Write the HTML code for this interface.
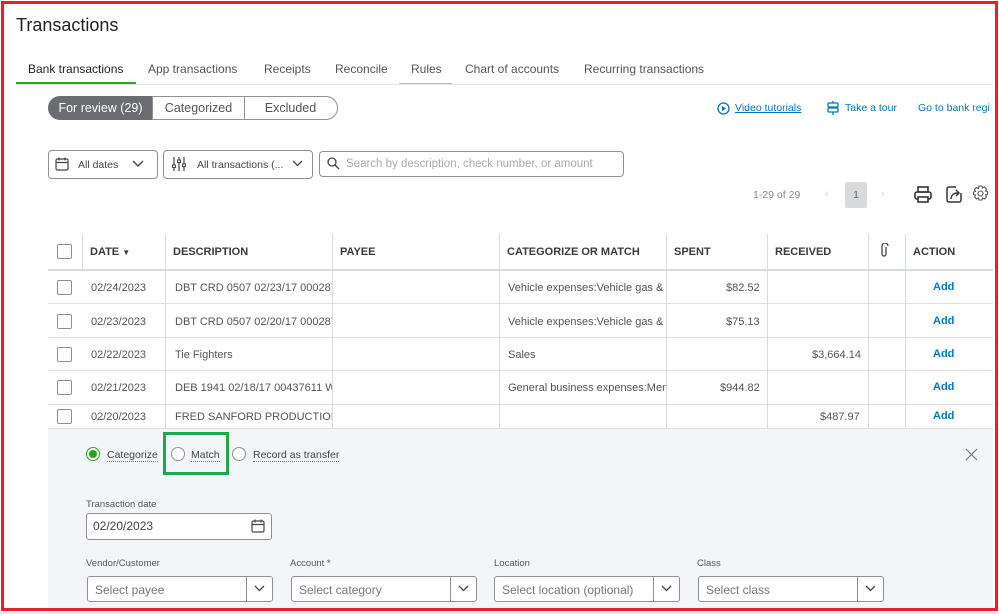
<!DOCTYPE html>
<html><head><meta charset="utf-8"><style>
*{box-sizing:border-box;margin:0;padding:0}
body{width:999px;height:614px;overflow:hidden;background:#e8e8ea;font-family:"Liberation Sans",sans-serif;color:#393a3d;position:relative}
.page{position:absolute;left:0;top:0;width:999px;height:612px;background:#fff}
.a{position:absolute;white-space:nowrap}
.red{position:absolute;left:1px;top:1px;width:997px;height:610px;border:3px solid #e8202a;pointer-events:none}
.tab{font-size:12px;color:#555;top:62px}
.seg{position:absolute;top:96px;height:24px;font-size:12.5px;line-height:22px;text-align:center}
.box{position:absolute;border:1px solid #8d9096;border-radius:4px;background:#fff}
.cb{position:absolute;left:57px;width:15px;height:15px;border:1px solid #8d9096;border-radius:2px;background:#fff}
.th{font-size:11px;font-weight:bold;color:#393a3d;top:246px}
.td{font-size:11px;color:#555}
.vl{position:absolute;width:1px;background:#d4dcea}
.hl{position:absolute;left:48px;width:945px;height:1px;background:#dcdfe4}
.add{font-size:11px;font-weight:bold;color:#0077c5;left:933px}
.lbl{font-size:9.5px;color:#555}
.sel{position:absolute;top:576px;height:26px;border:1px solid #8d9096;border-radius:3px;background:#fff;font-size:12px;color:#777;padding:6px 7px}
.sel .dd{position:absolute;right:0;top:0;width:26px;height:24px;border-left:1px solid #8d9096}
.dd svg{position:absolute;left:7px;top:8px}
.rad{position:absolute;width:14px;height:14px;border:1px solid #8d9096;border-radius:50%;background:#fff}
.u{border-bottom:1px dotted #777}
</style></head><body>
<div class="page">
<div class="a" style="left:16px;top:15px;font-size:18px;color:#222">Transactions</div>
<div class="a tab" style="left:28px;color:#222">Bank transactions</div>
<div class="a tab" style="left:148px">App transactions</div>
<div class="a tab" style="left:264px">Receipts</div>
<div class="a tab" style="left:335px">Reconcile</div>
<div class="a tab" style="left:411px">Rules</div>
<div class="a tab" style="left:465px">Chart of accounts</div>
<div class="a tab" style="left:584px">Recurring transactions</div>
<div style="position:absolute;left:16px;top:84px;width:977px;height:1px;background:#e3e5e8"></div>
<div style="position:absolute;left:16px;top:82px;width:120px;height:2px;background:#2ca01c"></div>
<div style="position:absolute;left:399px;top:83px;width:53px;height:1px;background:#bbb"></div>

<div class="seg" style="left:48px;width:105px;background:#6b6c72;color:#fff;border-radius:12px 0 0 12px;border:1px solid #6b6c72">For review (29)</div>
<div class="seg" style="left:152px;width:93px;border:1px solid #8d9096;color:#555">Categorized</div>
<div class="seg" style="left:244px;width:94px;border:1px solid #8d9096;border-left:none;border-radius:0 12px 12px 0;color:#555">Excluded</div>

<svg class="a" style="left:717px;top:102px" width="13" height="13" viewBox="0 0 13 13"><circle cx="6.5" cy="6.5" r="5.5" fill="none" stroke="#0077c5" stroke-width="1.3"/><path d="M5 4v5l4-2.5z" fill="#0077c5"/></svg>
<div class="a" style="left:735px;top:102px;font-size:10.5px;color:#0077c5;text-decoration:underline">Video tutorials</div>
<svg class="a" style="left:827px;top:101px" width="12" height="14" viewBox="0 0 12 14"><rect x="1" y="2" width="10" height="4" rx="1" fill="none" stroke="#0077c5" stroke-width="1.3"/><rect x="1" y="7" width="10" height="4" rx="1" fill="none" stroke="#0077c5" stroke-width="1.3"/><path d="M6 0v2M6 11v3" stroke="#0077c5" stroke-width="1.3"/></svg>
<div class="a" style="left:845px;top:102px;font-size:10.5px;color:#0077c5">Take a tour</div>
<div class="a" style="left:918px;top:102px;font-size:10.5px;color:#0077c5">Go to bank regi</div>

<div class="box" style="left:48px;top:150px;width:110px;height:29px"></div>
<svg class="a" style="left:55px;top:157px" width="14" height="14" viewBox="0 0 14 14"><rect x="1" y="2" width="12" height="11" rx="1.5" fill="none" stroke="#444" stroke-width="1.2"/><path d="M1 5.5h12M4 0.5v3M10 0.5v3" stroke="#444" stroke-width="1.2"/></svg>
<div class="a" style="left:78px;top:159px;font-size:10.5px;color:#444">All dates</div>
<svg class="a" style="left:132px;top:160px" width="12" height="8"><path d="M1 1l5 5 5-5" fill="none" stroke="#444" stroke-width="1.4"/></svg>
<div class="box" style="left:163px;top:150px;width:150px;height:29px"></div>
<svg class="a" style="left:171px;top:157px" width="16" height="14" viewBox="0 0 16 14"><path d="M3 0v14M8 0v14M13 0v14" stroke="#444" stroke-width="1.2"/><rect x="1.5" y="8" width="3" height="2.5" fill="#fff" stroke="#444"/><rect x="6.5" y="3" width="3" height="2.5" fill="#fff" stroke="#444"/><rect x="11.5" y="7" width="3" height="2.5" fill="#fff" stroke="#444"/></svg>
<div class="a" style="left:197px;top:159px;font-size:10.5px;color:#444">All transactions (...</div>
<svg class="a" style="left:292px;top:160px" width="11" height="7"><path d="M1 1l4.5 4.5 4.5-4.5" fill="none" stroke="#444" stroke-width="1.3"/></svg>
<div class="box" style="left:319px;top:151px;width:305px;height:26px"></div>
<svg class="a" style="left:327px;top:157px" width="13" height="13"><circle cx="5" cy="5" r="4" fill="none" stroke="#444" stroke-width="1.3"/><path d="M8 8l4 4" stroke="#444" stroke-width="1.4"/></svg>
<div class="a" style="left:346px;top:158px;font-size:11.5px;color:#aaa">Search by description, check number, or amount</div>

<div class="a" style="left:753px;top:189px;font-size:10.5px;color:#888">1-29 of 29</div>
<div class="a" style="left:825px;top:188px;font-size:11px;color:#ccc">‹</div>
<div class="a" style="left:845px;top:182px;width:22px;height:26px;background:#d9dadc;border-radius:2px;font-size:10.5px;color:#666;text-align:center;line-height:26px">1</div>
<div class="a" style="left:881px;top:188px;font-size:11px;color:#ccc">›</div>
<svg class="a" style="left:914px;top:186px" width="18" height="17" viewBox="0 0 18 17"><rect x="4" y="1" width="10" height="5" fill="none" stroke="#333" stroke-width="1.6"/><rect x="1" y="6" width="16" height="7" rx="2" fill="none" stroke="#333" stroke-width="1.6"/><rect x="4" y="11" width="10" height="5" fill="#fff" stroke="#333" stroke-width="1.6"/></svg>
<svg class="a" style="left:946px;top:186px" width="16" height="17" viewBox="0 0 16 17"><path d="M10 1H3a2 2 0 0 0-2 2v11a2 2 0 0 0 2 2h10a2 2 0 0 0 2-2V7" fill="none" stroke="#333" stroke-width="1.5"/><path d="M5 13c0-4 3-6 7-6M10 4l3 3-3 3" fill="none" stroke="#333" stroke-width="1.4"/></svg>
<svg class="a" style="left:972px;top:185px" width="17" height="17" viewBox="0 0 17 17"><circle cx="8.5" cy="8.5" r="2.5" fill="none" stroke="#555" stroke-width="1.1"/><path d="M7 1h3l.5 2 2-1 2 2-1 2 2 .5v3l-2 .5 1 2-2 2-2-1-.5 2H7l-.5-2-2 1-2-2 1-2-2-.5V7l2-.5-1-2 2-2 2 1z" fill="none" stroke="#555" stroke-width="1.1"/></svg>

<div class="vl" style="left:82px;top:234px;height:36px"></div>
<div class="vl" style="left:165px;top:234px;height:194px"></div>
<div class="vl" style="left:332px;top:234px;height:194px"></div>
<div class="vl" style="left:499px;top:234px;height:194px"></div>
<div class="vl" style="left:666px;top:234px;height:194px"></div>
<div class="vl" style="left:767px;top:234px;height:194px"></div>
<div class="vl" style="left:868px;top:234px;height:194px"></div>
<div class="vl" style="left:905px;top:234px;height:194px"></div>
<div class="hl" style="top:269px;height:2px;background:#d8dbe0"></div>
<div class="hl" style="top:303px"></div><div class="hl" style="top:337px"></div><div class="hl" style="top:370px"></div><div class="hl" style="top:404px"></div><div class="hl" style="top:428px"></div>
<div class="cb" style="top:244px"></div>
<div class="a th" style="left:90px">DATE <span style="font-size:8px">▼</span></div>
<div class="a th" style="left:173px">DESCRIPTION</div>
<div class="a th" style="left:340px">PAYEE</div>
<div class="a th" style="left:507px">CATEGORIZE OR MATCH</div>
<div class="a th" style="left:674px">SPENT</div>
<div class="a th" style="left:775px">RECEIVED</div>
<svg class="a" style="left:880px;top:243px" width="9" height="15" viewBox="0 0 9 15"><path d="M6 4v7a2 2 0 0 1-4 0V3a3 3 0 0 1 6 0" fill="none" stroke="#444" stroke-width="1.3"/></svg>
<div class="a th" style="left:913px">ACTION</div>

<div class="cb" style="top:280px"></div><div class="a td" style="left:91px;top:282px">02/24/2023</div><div class="a td" style="left:175px;top:282px;width:157px;overflow:hidden">DBT CRD 0507 02/23/17 00028741</div><div class="a td" style="left:508px;top:282px;width:158px;overflow:hidden">Vehicle expenses:Vehicle gas &amp; fuel</div><div class="a td" style="left:726px;top:282px">$82.52</div><div class="a add" style="top:281px">Add</div>
<div class="cb" style="top:314px"></div><div class="a td" style="left:91px;top:316px">02/23/2023</div><div class="a td" style="left:175px;top:316px;width:157px;overflow:hidden">DBT CRD 0507 02/20/17 00028741</div><div class="a td" style="left:508px;top:316px;width:158px;overflow:hidden">Vehicle expenses:Vehicle gas &amp; fuel</div><div class="a td" style="left:726px;top:316px">$75.13</div><div class="a add" style="top:315px">Add</div>
<div class="cb" style="top:347px"></div><div class="a td" style="left:175px;top:349px">Tie Fighters</div><div class="a td" style="left:91px;top:349px">02/22/2023</div><div class="a td" style="left:508px;top:349px">Sales</div><div class="a td" style="left:812px;top:349px">$3,664.14</div><div class="a add" style="top:348px">Add</div>
<div class="cb" style="top:380px"></div><div class="a td" style="left:91px;top:382px">02/21/2023</div><div class="a td" style="left:175px;top:382px;width:157px;overflow:hidden">DEB 1941 02/18/17 00437611 WAL</div><div class="a td" style="left:508px;top:382px;width:158px;overflow:hidden">General business expenses:Membership</div><div class="a td" style="left:720px;top:382px">$944.82</div><div class="a add" style="top:381px">Add</div>
<div class="cb" style="top:409px"></div><div class="a td" style="left:91px;top:411px">02/20/2023</div><div class="a td" style="left:175px;top:411px;width:157px;overflow:hidden">FRED SANFORD PRODUCTIONS</div><div class="a td" style="left:820px;top:411px">$487.97</div><div class="a add" style="top:410px">Add</div>

<div style="position:absolute;left:48px;top:429px;width:945px;height:183px;background:#f4f5f8"></div>
<div class="rad" style="left:86px;top:447px;border-color:#2ca01c;border-width:1.5px"><div style="position:absolute;left:2px;top:2px;width:8px;height:8px;border-radius:50%;background:#2ca01c"></div></div>
<div class="a" style="left:107px;top:449px;font-size:10.5px;color:#444"><span class="u">Categorize</span></div>
<div style="position:absolute;left:163px;top:432px;width:66px;height:43px;border:3px solid #1fa84a"></div>
<div class="rad" style="left:171px;top:447px"></div>
<div class="a" style="left:191px;top:449px;font-size:10.5px;color:#444"><span class="u">Match</span></div>
<div class="rad" style="left:232px;top:447px"></div>
<div class="a" style="left:253px;top:449px;font-size:10.5px;color:#444"><span class="u">Record as transfer</span></div>
<svg class="a" style="left:965px;top:448px" width="13" height="13"><path d="M1 1l11 11M12 1L1 12" stroke="#777" stroke-width="1.2"/></svg>

<div class="a lbl" style="left:86px;top:499px">Transaction date</div>
<div class="box" style="left:86px;top:513px;width:186px;height:27px;border-radius:3px"></div>
<div class="a" style="left:93px;top:519px;font-size:12px;color:#444">02/20/2023</div>
<svg class="a" style="left:251px;top:519px" width="14" height="14" viewBox="0 0 14 14"><rect x="1" y="2" width="12" height="11" rx="1.5" fill="none" stroke="#444" stroke-width="1.2"/><path d="M1 5.5h12M4 0.5v3M10 0.5v3" stroke="#444" stroke-width="1.2"/></svg>

<div class="a lbl" style="left:86px;top:558px">Vendor/Customer</div>
<div class="a lbl" style="left:290px;top:558px">Account *</div>
<div class="a lbl" style="left:494px;top:558px">Location</div>
<div class="a lbl" style="left:697px;top:558px">Class</div>
<div class="sel" style="left:87px;width:186px">Select payee<div class="dd"><svg width="11" height="7"><path d="M1 1l4.5 4.5 4.5-4.5" fill="none" stroke="#444" stroke-width="1.3"/></svg></div></div>
<div class="sel" style="left:291px;width:186px">Select category<div class="dd"><svg width="11" height="7"><path d="M1 1l4.5 4.5 4.5-4.5" fill="none" stroke="#444" stroke-width="1.3"/></svg></div></div>
<div class="sel" style="left:494px;width:186px">Select location (optional)<div class="dd"><svg width="11" height="7"><path d="M1 1l4.5 4.5 4.5-4.5" fill="none" stroke="#444" stroke-width="1.3"/></svg></div></div>
<div class="sel" style="left:698px;width:186px">Select class<div class="dd"><svg width="11" height="7"><path d="M1 1l4.5 4.5 4.5-4.5" fill="none" stroke="#444" stroke-width="1.3"/></svg></div></div>
</div>
<div class="red"></div>
</body></html>
